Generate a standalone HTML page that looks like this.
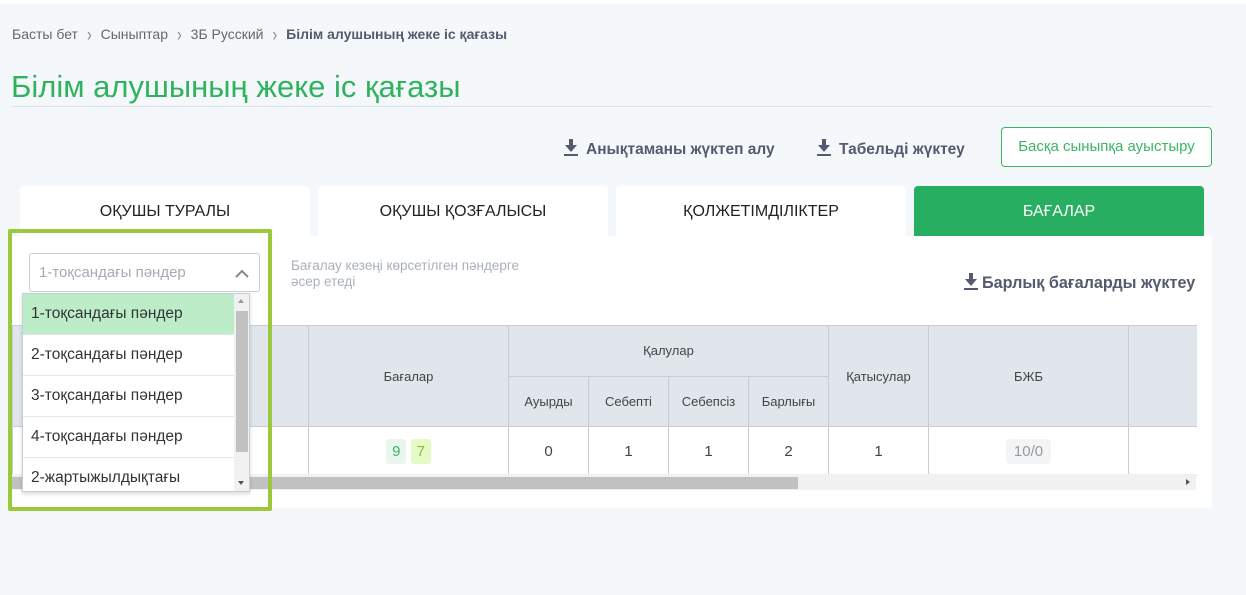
<!DOCTYPE html><html><head><meta charset="utf-8"><style>
*{box-sizing:border-box;margin:0;padding:0}
body{width:1246px;height:595px;background:#f5f8fb;font-family:"Liberation Sans",sans-serif;position:relative;overflow:hidden;color:#333}
.a{position:absolute}
.tab{position:absolute;top:186px;height:52px;width:290px;background:#fff;border-radius:4px 4px 0 0;text-align:center;line-height:52px;font-size:16px;color:#222}
.dl{position:absolute;top:139px;font-size:15.5px;color:#555a6e;font-weight:bold;white-space:nowrap}
.ic{display:inline-block;vertical-align:-2px;margin-right:8px}
table{border-collapse:collapse;position:absolute;left:12px;top:325px;font-size:13px;color:#444}
td{border:1px solid #c8ccd6;text-align:center;padding:0}
.h td{background:#e1e5ec}
.it{height:41px;line-height:40px;padding-left:8px;font-size:15.5px;color:#333;border-bottom:1px solid #e3e6ea}
.ch{display:inline-block;margin:0 9px;color:#888;transform:scaleY(1.4)}
</style></head><body>
<div class="a" style="left:0;top:0;width:1246px;height:4px;background:#fff"></div>
<div class="a" style="left:12px;top:26px;font-size:14px;color:#666;white-space:nowrap">Басты бет<span class="ch">›</span>Сыныптар<span class="ch">›</span>3Б Русский<span class="ch">›</span><b style="color:#555a6e">Білім алушының жеке іс қағазы</b></div>
<div class="a" style="left:11px;top:69px;font-size:31px;color:#2fb35f;white-space:nowrap">Білім алушының жеке іс қағазы</div>
<div class="a" style="left:12px;top:106px;width:1200px;height:1px;background:#dde1e6"></div>
<div class="dl" style="left:564px"><svg class="ic" width="14" height="17" viewBox="0 0 14 17"><path d="M5 0h4v6h4l-6 7-6-7h4z" fill="#555a6e"/><rect y="15" width="14" height="2" fill="#555a6e"/></svg>Анықтаманы жүктеп алу</div>
<div class="dl" style="left:817px"><svg class="ic" width="14" height="17" viewBox="0 0 14 17"><path d="M5 0h4v6h4l-6 7-6-7h4z" fill="#555a6e"/><rect y="15" width="14" height="2" fill="#555a6e"/></svg>Табельді жүктеу</div>
<div class="a" style="left:1001px;top:127px;width:211px;height:40px;border:1px solid #3cb563;border-radius:4px;background:#fff;color:#3cb563;font-size:15px;text-align:center;line-height:38px;white-space:nowrap">Басқа сыныпқа ауыстыру</div>
<div class="tab" style="left:20px">ОҚУШЫ ТУРАЛЫ</div>
<div class="tab" style="left:318px">ОҚУШЫ ҚОЗҒАЛЫСЫ</div>
<div class="tab" style="left:616px">ҚОЛЖЕТІМДІЛІКТЕР</div>
<div class="tab" style="left:914px;background:#27ae60;color:#fff">БАҒАЛАР</div>
<div class="a" style="left:12px;top:236px;width:1200px;height:272px;background:#fff;border-radius:0 4px 4px 4px"></div>
<div class="a" style="left:291px;top:258px;font-size:13.5px;color:#aab0bb;line-height:16px">Бағалау кезеңі көрсетілген пәндерге<br>әсер етеді</div>
<div class="dl" style="left:964px;top:273px;font-size:16.2px"><svg class="ic" style="margin-right:4px" width="14" height="17" viewBox="0 0 14 17"><path d="M5 0h4v6h4l-6 7-6-7h4z" fill="#555a6e"/><rect y="15" width="14" height="2" fill="#555a6e"/></svg>Барлық бағаларды жүктеу</div>
<table>
<tr class="h"><td rowspan="2" style="width:296px;height:101px"></td><td rowspan="2" style="width:200px">Бағалар</td><td colspan="4" style="height:50px">Қалулар</td><td rowspan="2" style="width:100px">Қатысулар</td><td rowspan="2" style="width:200px">БЖБ</td><td rowspan="2" style="width:68px;border-right:none"></td></tr>
<tr class="h"><td style="width:80px;height:50px">Ауырды</td><td style="width:80px">Себепті</td><td style="width:80px">Себепсіз</td><td style="width:80px">Барлығы</td></tr>
<tr style="font-size:15px"><td style="height:49px"></td><td><span style="background:#e8f6ee;color:#3cb563;padding:4px 6px;border-radius:3px">9</span> <span style="background:#e6fac8;color:#8bbf2e;padding:4px 6px;border-radius:3px">7</span></td><td>0</td><td>1</td><td>1</td><td>2</td><td>1</td><td><span style="background:#f3f4f6;color:#999;padding:4px 8px;border-radius:4px">10/0</span></td><td style="border-right:none"></td></tr>
</table>
<div class="a" style="left:12px;top:474px;width:1184px;height:16px;background:#f1f1f1"></div>
<div class="a" style="left:12px;top:477px;width:786px;height:12px;background:#c1c1c1"></div>
<div class="a" style="left:1186px;top:479px;width:0;height:0;border-left:4px solid #555;border-top:3.5px solid transparent;border-bottom:3.5px solid transparent"></div>
<div class="a" style="left:8px;top:229px;width:264px;height:282px;border:4px solid #9cc83c;border-radius:2px"></div>
<div class="a" style="left:29px;top:253px;width:231px;height:39px;border:1px solid #c9ced6;border-radius:3px;background:#fff;font-size:15px;color:#a5abb4;line-height:38px;padding-left:9px">1-тоқсандағы пәндер<svg class="a" style="left:205px;top:15px" width="14" height="9" viewBox="0 0 14 9"><path d="M1 8l6-6 6 6" fill="none" stroke="#888" stroke-width="2"/></svg></div>
<div class="a" style="left:22px;top:293px;width:228px;height:199px;background:#fff;border:1px solid #c9ced6;box-shadow:0 2px 4px rgba(0,0,0,.15);overflow:hidden">
<div style="width:212px">
<div class="it" style="background:#bdecc8">1-тоқсандағы пәндер</div>
<div class="it">2-тоқсандағы пәндер</div>
<div class="it">3-тоқсандағы пәндер</div>
<div class="it">4-тоқсандағы пәндер</div>
<div class="it">2-жартыжылдықтағы</div></div>
<div class="a" style="left:211px;top:0;width:16px;height:198px;background:#f1f1f1"></div>
<div class="a" style="left:213px;top:17px;width:12px;height:141px;background:#c1c1c1"></div>
<div class="a" style="left:215px;top:5px;border-bottom:4px solid #999;border-left:3.5px solid transparent;border-right:3.5px solid transparent"></div>
<div class="a" style="left:215px;top:187px;border-top:4px solid #555;border-left:3.5px solid transparent;border-right:3.5px solid transparent"></div>
</div>
</body></html>
